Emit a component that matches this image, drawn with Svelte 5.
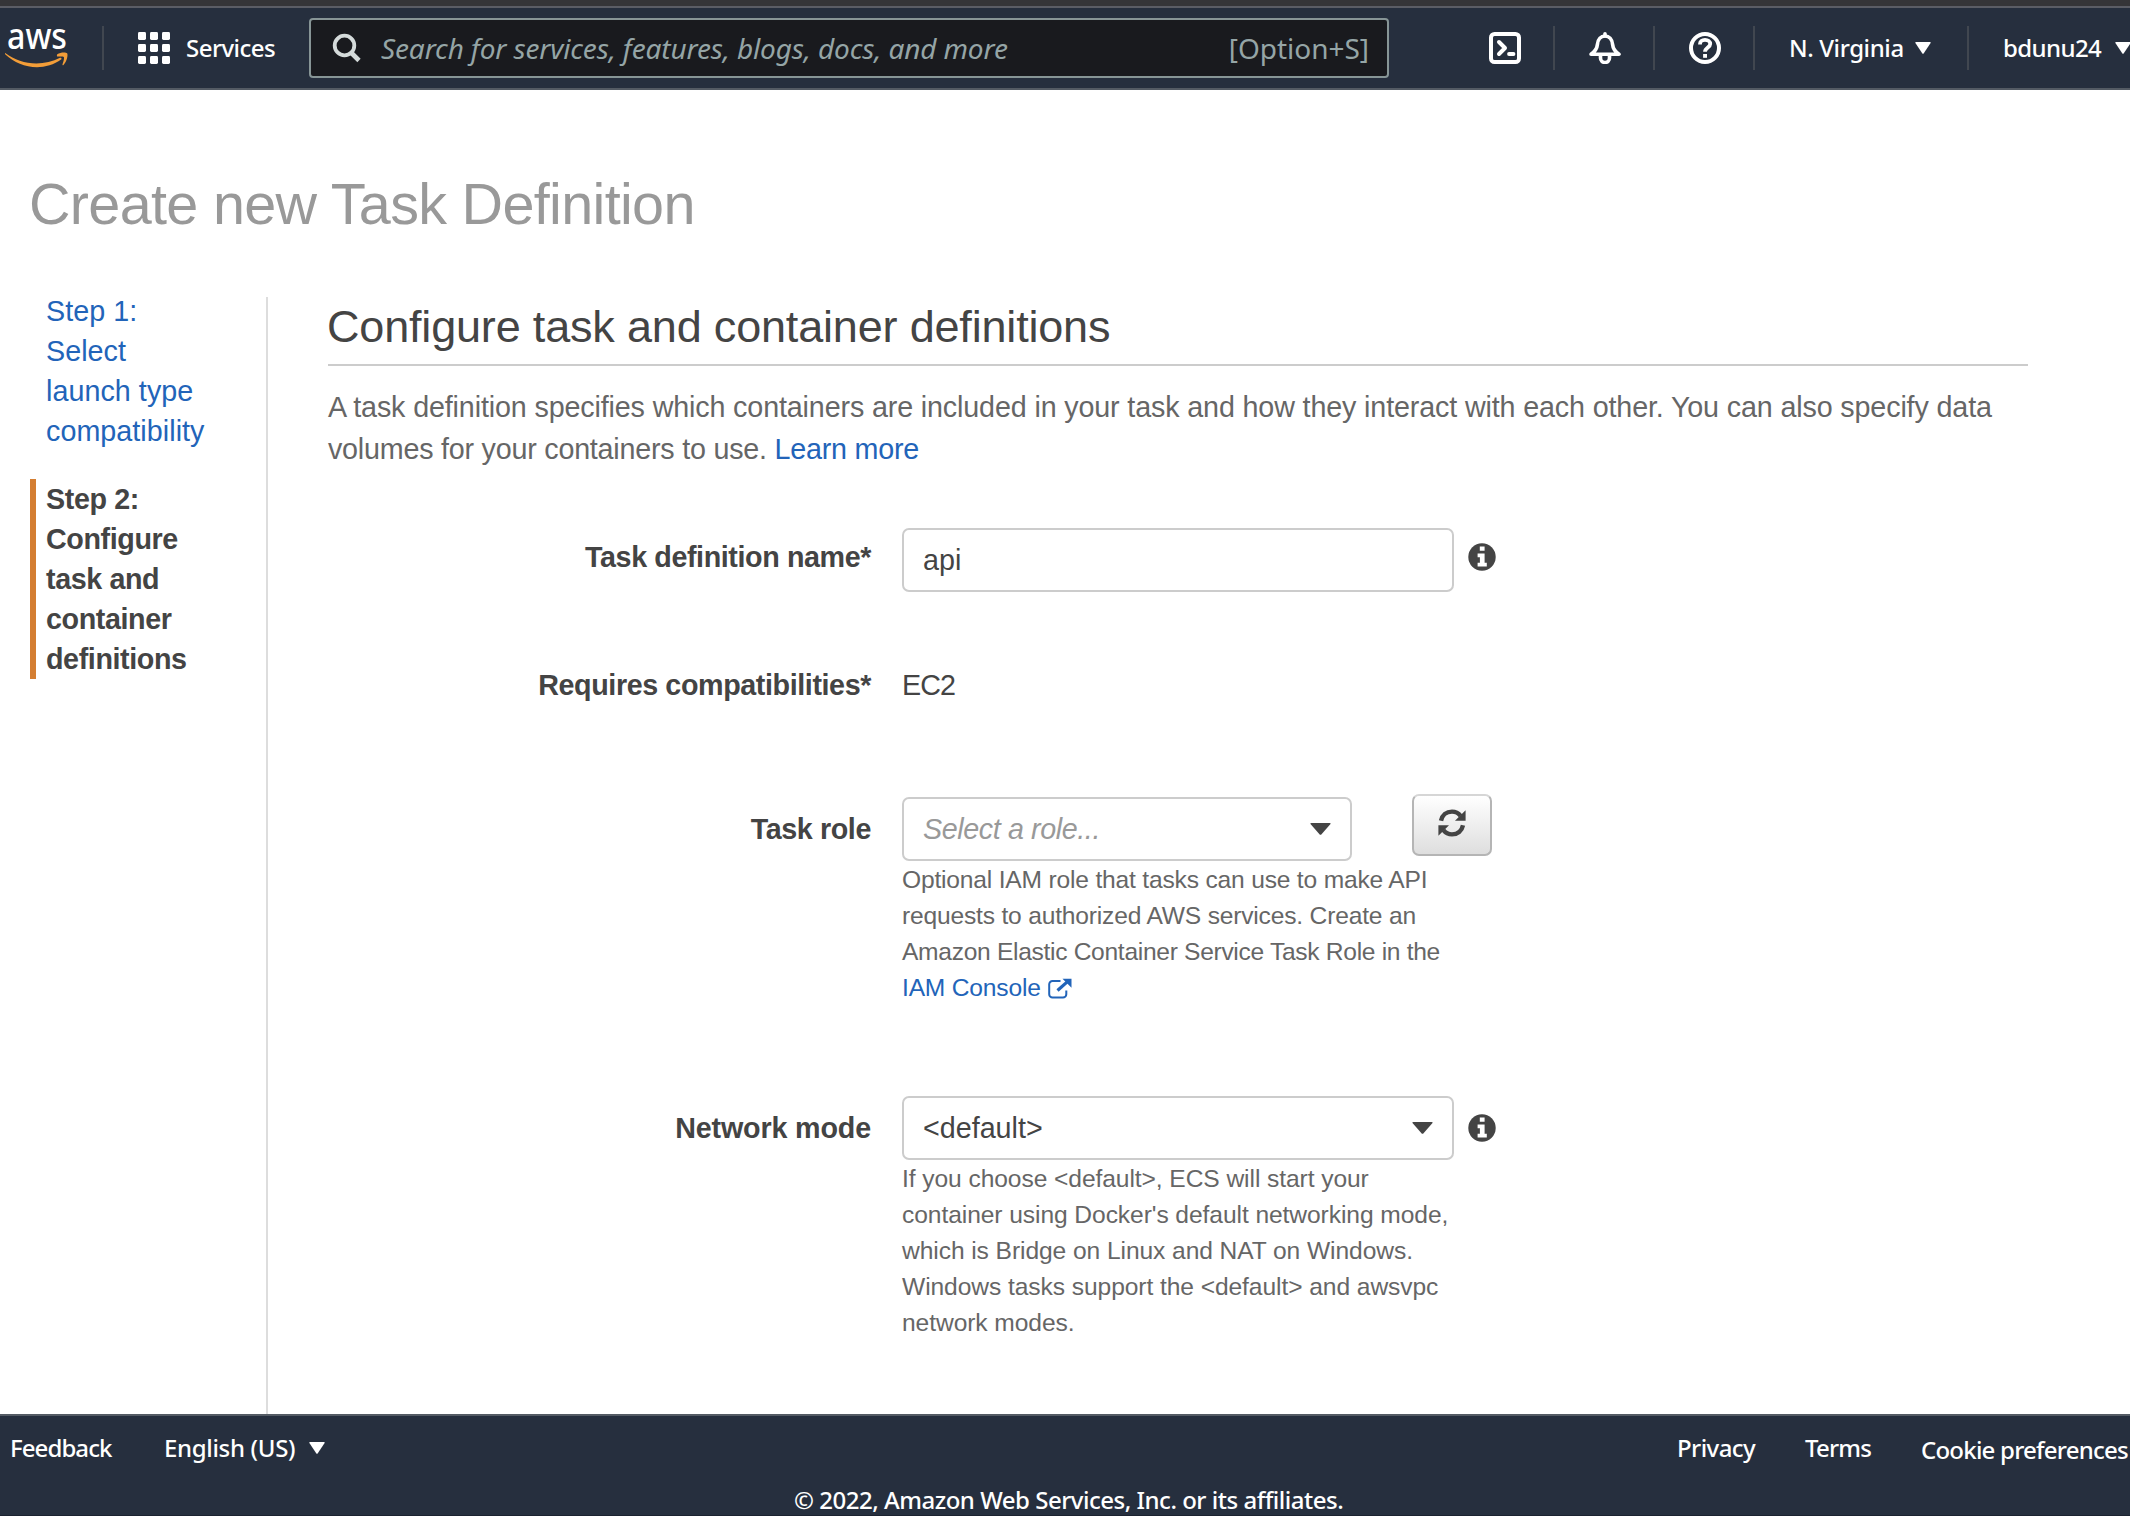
<script>
  const gridCells = [0, 12, 24].flatMap((y) => [0, 12, 24].map((x) => ({ x, y })));
</script>

{#snippet caret(w, h)}
  <svg class="caret" width={w} height={h} viewBox="0 0 16 12" preserveAspectRatio="none" aria-hidden="true">
    <path d="M1 0H15Q16.2 0 15.6 1L8.8 11.3Q8 12.4 7.2 11.3L.4 1Q-.2 0 1 0Z" fill="currentColor" />
  </svg>
{/snippet}

{#snippet info()}
  <svg class="info" width="28" height="28" viewBox="0 0 28 28" aria-label="More information">
    <circle cx="14" cy="14" r="13.7" fill="#444" />
    <path d="M11.8 3.6h4.8v4.2h-4.8zM9.6 10.6h7v9.2h2.2v3.6H9.6v-3.6h2.3v-5.6H9.6z" fill="#fff" />
  </svg>
{/snippet}

<div class="page">
  <header>
    <svg class="logo" width="64" height="80" viewBox="0 -20 64 80" aria-label="AWS">
      <text x="2" y="21" textLength="60" lengthAdjust="spacingAndGlyphs">aws</text>
      <path d="M.6 25.2C9 31.6 20 35.4 31.4 35.4c8 0 16.4-2 23.6-5.6 1.2-.6 2.2.8 1.1 1.7C49.4 36.6 40 39.2 32 39.2 20 39.2 8.800 34.600 .4 26.600c-.8-.8-.4-1.800 .2-1.400z" fill="#f29d38" />
      <path d="M52.300 26.200c3-2.100 8.600-2.300 9.800-.9 1.200 1.600-.3 8.400-3.600 11.600-.7.6-1.300.3-1-.5.900-2.300 2-6.300 1.300-7.300-.8-1-4.400-.7-6-.5-1 .1-1.200-1.400-.5-2.400z" fill="#f29d38" />
    </svg>
    <span class="rule first"></span>
    <svg class="apps" width="32" height="32" viewBox="0 0 32 32" aria-hidden="true">
      {#each gridCells as c}
        <rect x={c.x} y={c.y} width="8" height="8" rx="1.4" fill="#fff" />
      {/each}
    </svg>
    <span class="services">Services</span>
    <div class="search">
      <svg width="30" height="30" viewBox="0 0 30 30" fill="none" stroke="#d5dbdb" aria-hidden="true">
        <circle cx="12.500" cy="12.500" r="9.800" stroke-width="3.800" />
        <path d="M19 19.500l8 8" stroke-width="4.600" />
      </svg>
      <span class="placeholder">Search for services, features, blogs, docs, and more</span>
      <span class="shortcut">[Option+S]</span>
    </div>
    <div class="tools">
      <div class="tool">
        <svg width="32" height="32" viewBox="0 0 32 32" fill="none" stroke="#fff" aria-label="CloudShell">
          <rect x="2" y="2" width="28" height="28" rx="3.500" stroke-width="4" />
          <path d="M10 10l6 6-6 6" stroke-width="4" stroke-linecap="round" stroke-linejoin="round" />
          <path d="M20 22h4.500" stroke-width="3.800" stroke-linecap="round" />
        </svg>
      </div>
      <span class="rule"></span>
      <div class="tool">
        <svg width="32" height="32" viewBox="0 0 32 32" fill="none" stroke="#fff" aria-label="Notifications">
          <path d="M2 22.300C6 19.500 8 17 8.400 12.500 8.900 7 12 4 16 4s7.100 3 7.600 8.500C24 17 26 19.500 30 22.300Z" stroke-width="3.600" stroke-linejoin="round" />
          <path d="M16 4V1.800M11.500 23.500V26a4.500 4.500 0 0 0 9 0v-2.500" stroke-width="3.600" stroke-linecap="round" />
        </svg>
      </div>
      <span class="rule"></span>
      <div class="tool">
        <svg width="32" height="32" viewBox="0 0 32 32" fill="none" stroke="#fff" aria-label="Help">
          <circle cx="16" cy="16" r="14" stroke-width="4" />
          <path d="M11 12.600V12c0-2.600 2-4.200 5-4.200s5.200 1.600 5.200 4.200c0 3.400-5.200 3.600-5.200 7.800" stroke-width="3.800" />
          <rect x="14.100" y="22" width="3.900" height="3.800" fill="#fff" stroke="none" />
        </svg>
      </div>
      <span class="rule"></span>
    </div>
    <span class="region">N. Virginia</span>
    {@render caret(16, 12)}
    <span class="rule second"></span>
    <span class="account">bdunu24</span>
    {@render caret(16, 12)}
  </header>

  <h1>Create new Task Definition</h1>

  <div class="body">
    <nav>
      <a class="step" href="#step-1">Step 1:<br />Select<br />launch type<br />compatibility</a>
      <div class="step current">Step 2:<br />Configure<br />task and<br />container<br />definitions</div>
    </nav>

    <main>
      <h2>Configure task and container definitions</h2>
      <p class="intro">
        A task definition specifies which containers are included in your task and how they interact with each other. You can also specify data<br /><span class="second-line">volumes for your containers to use. <a href="#learn">Learn more</a></span>
      </p>

      <div class="row name">
        <span class="label">Task definition name*</span>
        <div class="box wide"><span class="api">api</span></div>
        {@render info()}
      </div>

      <div class="row compat">
        <span class="label">Requires compatibilities*</span>
        <span class="value">EC2</span>
      </div>

      <div class="row role">
        <span class="label">Task role</span>
        <div class="box narrow"><em>Select a role...</em>{@render caret(21, 12)}</div>
        <button aria-label="Refresh">
          <svg width="28" height="28" viewBox="0 0 28 28" fill="none" stroke="#444" stroke-width="4.4" aria-hidden="true">
            <path d="M3 11.800C4.200 6 8.500 2.600 14 2.600c3.600 0 6.400 1.400 8.600 4.200" />
            <path d="M25 16.200C23.800 22 19.500 25.400 14 25.400c-3.600 0-6.400-1.400-8.600-4.200" />
            <path d="M27.600 1.200v10.600H17zM.4 26.800V16.200H11z" fill="#444" stroke="none" />
          </svg>
        </button>
      </div>
      <p class="help role-help">
        Optional IAM role that tasks can use to make API<br />requests to authorized AWS services. Create an<br /><span class="tight">Amazon Elastic Container Service Task Role in the</span><br /><a href="#iam">IAM Console<svg class="ext" width="24" height="21" viewBox="0 0 24 21" fill="none" stroke="currentColor" aria-hidden="true">
            <path d="M12.500 3H4.500A3.300 3.300 0 0 0 1.200 6.300V16.200A3.300 3.300 0 0 0 4.500 19.500H15A3.300 3.300 0 0 0 18.300 16.200V12.500" stroke-width="2" />
            <path d="M9.500 12.500L19.500 3.600" stroke-width="3.200" />
            <path d="M14.500 .8H23.500V9.800Z" fill="currentColor" stroke="none" />
          </svg></a>
      </p>

      <div class="row mode">
        <span class="label">Network mode</span>
        <div class="box wide"><span class="default">&lt;default&gt;</span>{@render caret(21, 12)}</div>
        {@render info()}
      </div>
      <p class="help mode-help">
        If you choose &lt;default&gt;, ECS will start your<br />container using Docker's default networking mode,<br />which is Bridge on Linux and NAT on Windows.<br />Windows tasks support the &lt;default&gt; and awsvpc<br />network modes.
      </p>
    </main>
  </div>

  <footer>
    <div class="links">
      <span class="feedback">Feedback</span>
      <span class="language">English (US)</span>
      {@render caret(16, 12)}
      <span class="privacy">Privacy</span>
      <span class="terms">Terms</span>
      <span class="cookies">Cookie preferences</span>
    </div>
    <div class="copyright">© 2022, Amazon Web Services, Inc. or its affiliates.</div>
  </footer>
</div>

<style>
  :global(body) {
    background: #fff;
    overflow: hidden;
  }
  .page {
    box-sizing: border-box;
    width: 2130px;
    height: 1516px;
    overflow: hidden;
    display: flex;
    flex-direction: column;
    border-top: 6px solid #353538;
    font: 28.7px/40px 'Liberation Sans', Arial, sans-serif;
    color: #444;
    white-space: nowrap;
  }
  svg {
    display: block;
    flex: none;
  }
  a {
    color: #2264b9;
    text-decoration: none;
  }

  header {
    box-sizing: border-box;
    flex: none;
    height: 84px;
    display: flex;
    align-items: center;
    border-top: 2px solid #5b5d65;
    border-bottom: 2px solid #545b64;
    background: #262f3e;
    color: #fff;
    font: 500 24px/40px 'Noto Sans', sans-serif;
  }
  header > * {
    flex: none;
  }
  .logo {
    margin-left: 5px;
    overflow: visible;
  }
  .logo text {
    font: 500 37px 'Noto Sans', sans-serif;
    fill: #fff;
  }
  .rule {
    flex: none;
    width: 2px;
    height: 44px;
    background: #414750;
  }
  .rule.first {
    margin-left: 33px;
  }
  .apps {
    margin-left: 34px;
  }
  .services {
    width: 123px;
    margin-left: 16px;
    letter-spacing: -0.545px;
  }
  .search {
    box-sizing: border-box;
    width: 1080px;
    height: 60px;
    display: flex;
    align-items: center;
    padding: 0 18px 0 21px;
    border: 2px solid #879596;
    border-radius: 4px;
    background: #191a1e;
    color: #95a5a6;
    font: 28px/56px 'Noto Sans', sans-serif;
  }
  .placeholder {
    flex: 1;
    margin-left: 19px;
    font-style: italic;
    letter-spacing: -0.13px;
  }
  .shortcut {
    letter-spacing: -0.03px;
  }
  .tools {
    display: flex;
    align-items: center;
    margin-left: 66px;
  }
  .tool {
    width: 32px;
    margin: 0 32px 0 34px;
  }
  .region {
    width: 126px;
    margin-left: 34px;
    letter-spacing: -0.4px;
  }
  .rule.second {
    margin-left: 36px;
  }
  .account {
    width: 112px;
    margin-left: 34px;
    letter-spacing: -0.605px;
  }

  h1 {
    flex: none;
    margin: 84px 0 0 29px;
    font-size: 57.5px;
    font-weight: 400;
    line-height: 60px;
    letter-spacing: -0.66px;
    color: #999;
  }

  .body {
    flex: 1;
    min-height: 0;
    display: flex;
    margin-top: 63px;
  }
  nav {
    box-sizing: border-box;
    flex: none;
    width: 268px;
    padding-left: 30px;
    border-right: 2px solid #ddd;
  }
  .step {
    display: block;
    width: 150px;
    padding-left: 16px;
    margin-top: -6px;
    letter-spacing: 0.05px;
  }
  .current {
    box-sizing: border-box;
    height: 200px;
    margin-top: 28px;
    padding-left: 10px;
    border-left: 6px solid #d47e32;
    font-weight: 700;
    letter-spacing: -0.4px;
  }

  main {
    width: 1700px;
    margin-left: 60px;
  }
  h2 {
    margin: 0;
    height: 67px;
    border-bottom: 2px solid #ccc;
    text-indent: -1px;
    font-size: 45px;
    font-weight: 400;
    line-height: 60px;
    letter-spacing: -0.18px;
  }
  .intro {
    margin: 20px 0 0;
    line-height: 42px;
    letter-spacing: -0.138px;
    color: #666;
  }
  .second-line {
    letter-spacing: -0.22px;
  }

  .row {
    display: flex;
    align-items: center;
    height: 64px;
  }
  .label {
    width: 543px;
    margin-right: 31px;
    text-align: right;
    font-weight: 700;
    letter-spacing: -0.4px;
  }
  .value {
    letter-spacing: -0.9px;
  }
  .box {
    box-sizing: border-box;
    height: 64px;
    display: flex;
    align-items: center;
    justify-content: space-between;
    padding: 0 19px;
    border: 2px solid #ccc;
    border-radius: 7px;
  }
  .wide {
    width: 552px;
  }
  .narrow {
    width: 450px;
  }
  .box em {
    color: #999;
    letter-spacing: -0.4px;
  }
  .api,
  .default {
    letter-spacing: 0;
  }
  .info {
    margin-left: 14px;
  }
  .name {
    margin-top: 58px;
  }
  .name .label,
  .name .info {
    margin-bottom: 6px;
  }
  .compat {
    margin-top: 61px;
  }
  .role {
    margin-top: 80px;
  }
  .mode {
    margin-top: 90px;
  }
  .mode .label {
    letter-spacing: -0.15px;
  }
  button {
    box-sizing: border-box;
    width: 80px;
    height: 62px;
    display: flex;
    align-items: center;
    justify-content: center;
    margin: 0 0 8px 60px;
    padding: 0 0 4px;
    border: 2px solid #b5b5b5;
    border-top-color: #d6d6d6;
    border-radius: 7px;
    background: linear-gradient(#fff, #dedede);
  }
  .help {
    margin: 1px 0 0 574px;
    font-size: 24.6px;
    line-height: 36px;
    color: #666;
  }
  .role-help {
    letter-spacing: -0.19px;
  }
  .tight {
    letter-spacing: -0.31px;
  }
  .mode-help {
    letter-spacing: -0.08px;
  }
  .ext {
    display: inline-block;
    margin-left: 7px;
    vertical-align: -3px;
  }

  footer {
    box-sizing: border-box;
    flex: none;
    height: 102px;
    border-top: 2px solid #545b64;
    border-bottom: 1px solid #1b2230;
    background: #262f3e;
    color: #fff;
    font: 500 24px/36px 'Noto Sans', sans-serif;
  }
  .links {
    display: flex;
    align-items: center;
    height: 36px;
    margin-top: 14px;
  }
  .feedback {
    width: 154px;
    margin-left: 10px;
    letter-spacing: -0.928px;
  }
  .language {
    width: 145px;
    letter-spacing: -0.328px;
  }
  .privacy {
    margin-left: 1352px;
    width: 128px;
    letter-spacing: -0.572px;
  }
  .terms {
    width: 116px;
    letter-spacing: -0.8px;
  }
  .cookies {
    padding-top: 4px;
    letter-spacing: -0.777px;
  }
  .copyright {
    margin: 16px 0 0 794px;
    letter-spacing: -0.49px;
  }
</style>
